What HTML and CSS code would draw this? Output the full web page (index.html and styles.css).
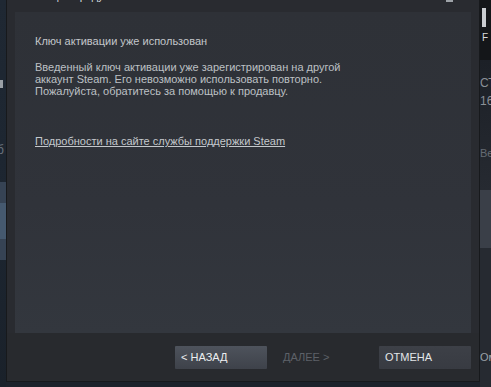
FILE: index.html
```html
<!DOCTYPE html>
<html lang="ru">
<head>
<meta charset="utf-8">
<link rel="stylesheet" href="styles.css">
</head>
<body>
<div class="screen">
  <div class="side side-left">
    <div class="l-top"></div>
    <div class="l-bar"></div>
    <div class="l-gap1"></div>
    <div class="l-glyph">б</div>
    <div class="l-gap2"></div>
    <div class="l-block"><div class="l-block-in"></div></div>
  </div>
  <div class="dialog">
    <div class="titlebar">
      <span class="title">Активация продукта</span>
      <span class="winbtns"><span class="min"></span><span class="close">✕</span></span>
    </div>
    <div class="panel">
      <p class="heading">Ключ активации уже использован</p>
      <p class="body">Введенный ключ активации уже зарегистрирован на другой<br>аккаунт Steam. Его невозможно использовать повторно.<br>Пожалуйста, обратитесь за помощью к продавцу.</p>
      <a class="link" href="#">Подробности на сайте службы поддержки Steam</a>
    </div>
    <div class="footer">
      <button class="btn btn-back">&lt; НАЗАД</button>
      <button class="btn btn-next" disabled>ДАЛЕЕ &gt;</button>
      <button class="btn btn-cancel">ОТМЕНА</button>
    </div>
  </div>
  <div class="side side-right">
    <div class="r-top">
      <div class="r-bar"></div>
      <div class="r-f">F</div>
    </div>
    <div class="r-mid">
      <div class="r-t1">СТ</div>
      <div class="r-t2">16</div>
      <div class="r-t3">Ве</div>
    </div>
    <div class="r-block"></div>
    <div class="r-low">
      <div class="r-t4">Ом</div>
    </div>
  </div>
</div>
</body>
</html>
```

FILE: styles.css
```css
html, body {
  margin: 0;
  padding: 0;
}
body {
  width: 491px;
  height: 387px;
  overflow: hidden;
  background: #1c222b;
  font-family: "Liberation Sans", Arial, sans-serif;
}
.screen {
  display: flex;
  height: 387px;
}
.side {
  flex: none;
  overflow: hidden;
  display: flex;
  flex-direction: column;
  font-size: 12px;
  line-height: 12px;
}
.side-left {
  width: 6px;
  background: linear-gradient(#1f2833, #1c2530 60%, #1a212a);
}
.l-top { height: 80px; }
.l-bar { height: 8px; width: 3px; background: #9aa0a6; }
.l-gap1 { height: 56px; }
.l-glyph { color: #6a727c; margin-left: -3px; height: 14px; }
.l-gap2 { height: 24px; }
.l-block {
  height: 78px;
  background: #364354;
  display: flex;
  flex-direction: column;
  justify-content: center;
}
.l-block-in { height: 36px; background: #45596f; }

.dialog {
  flex: none;
  width: 472px;
  height: 381px;
  background: #292b30;
  border-left: 1px solid #17191c;
  border-right: 1px solid #17191c;
  border-bottom: 1px solid #17191c;
  display: flex;
  flex-direction: column;
  overflow: hidden;
}
.titlebar {
  height: 12px;
  flex: none;
  display: flex;
  justify-content: space-between;
  padding: 0 9px 0 10px;
}
.title {
  color: #d6d9dc;
  font-size: 11px;
  line-height: 12px;
  margin-top: -10px;
}
.winbtns {
  display: flex;
  gap: 6px;
  margin-top: -9px;
  color: #9ea3a8;
  font-size: 11px;
  line-height: 11px;
}
.min { width: 7px; height: 2px; background: #9ea3a8; margin-top: 9px; }
.close { margin-right: 2px; }

.panel {
  margin: 0 8px;
  height: 321px;
  flex: none;
  box-sizing: border-box;
  padding: 22px 20px 0 20px;
  background: linear-gradient(#2e3137, #30333a 60%, #33373e);
}
.heading {
  margin: 0;
  color: #c3c6ca;
  font-size: 11px;
  line-height: 14px;
}
.body {
  margin: 13px 0 0 0;
  color: #bdc0c4;
  font-size: 11px;
  line-height: 12px;
}
.link {
  display: inline-block;
  margin-top: 37px;
  color: #c4c8cc;
  font-size: 11px;
  line-height: 14px;
  text-decoration: underline;
}
.footer {
  flex: 1;
  display: flex;
  justify-content: flex-end;
  align-items: flex-start;
  gap: 10px;
  padding: 13px 8px 0 0;
  background: #282a2e;
}
.btn {
  width: 92px;
  height: 23px;
  border: 0;
  padding: 0 0 0 6px;
  text-align: left;
  font-family: "Liberation Sans", Arial, sans-serif;
  font-size: 11px;
  line-height: 23px;
  border-radius: 1px;
}
.btn-back {
  background: linear-gradient(#4e535c, #3e424a);
  color: #eceef0;
}
.btn-next {
  background: transparent;
  color: #5d6168;
}
.btn-cancel {
  background: linear-gradient(#3d4047, #383b42);
  color: #e3e6e9;
}

.side-right {
  width: 11px;
  background: #1e232a;
}
.r-top {
  height: 60px;
  background: #141619;
  padding-left: 2px;
}
.r-bar { width: 4px; height: 19px; margin-top: 8px; background: #c9ccd0; }
.r-f { color: #d8dadc; font-size: 10px; line-height: 10px; margin-top: 6px; }
.r-mid {
  height: 130px;
  color: #8a9097;
  background: linear-gradient(#1c2027, #262a31);
}
.r-t1 { margin-top: 17px; }
.r-t2 { margin-top: 6px; }
.r-t3 { margin-top: 40px; color: #656b73; font-size: 11px; }
.r-block { height: 58px; background: #3a3f48; }
.r-low {
  flex: 1;
  background: #262a31;
  color: #9aa0a6;
  display: flex;
  flex-direction: column;
  justify-content: flex-end;
  padding-bottom: 24px;
}
.r-t4 { font-size: 11px; }
```
